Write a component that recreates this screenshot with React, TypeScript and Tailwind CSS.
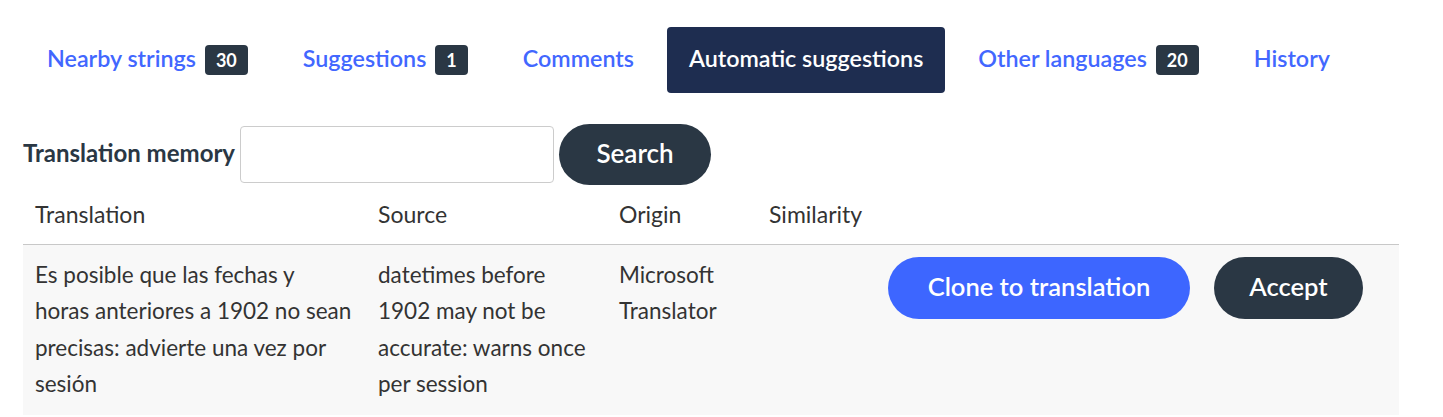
import { useState } from "react";

// ==========================================
// Types
// ==========================================

interface Tab {
    label: string;
    count?: number;
}

interface Suggestion {
    translation: string;
    source: string;
    origin: string;
    similarity: string;
}

const TABS: Tab[] = [
    { label: "Nearby strings", count: 30 },
    { label: "Suggestions", count: 1 },
    { label: "Comments" },
    { label: "Automatic suggestions" },
    { label: "Other languages", count: 20 },
    { label: "History" },
];

const ROWS: Suggestion[] = [
    {
        translation: "Es posible que las fechas y horas anteriores a 1902 no sean precisas: advierte una vez por sesión",
        source: "datetimes before 1902 may not be accurate: warns once per session",
        origin: "Microsoft Translator",
        similarity: "",
    },
];

const FONT = "font-['Lato','Liberation_Sans',sans-serif]";

// ==========================================
// Component
// ==========================================

export default function App() {
    const [active, setActive] = useState("Automatic suggestions");
    const [query, setQuery] = useState("");

    return (
        <div className={`${FONT} bg-white min-h-screen px-[23px] pt-[27px] text-[#333]`}>
            {/* Tabs */}
            <nav className="flex items-center gap-[11px] pl-[2px]">
                {TABS.map((tab) => (
                    <button
                        key={tab.label}
                        onClick={() => setActive(tab.label)}
                        className={
                            active === tab.label
                                ? "h-[66px] px-[22px] rounded-[4px] bg-[#1e2d50] text-white text-[23.3px] font-semibold flex items-center gap-[9px]"
                                : "h-[66px] px-[22px] rounded-[4px] text-[#4267ff] text-[23.3px] font-semibold flex items-center gap-[9px]"
                        }
                    >
                        <span className="pb-[3px]">{tab.label}</span>
                        {tab.count !== undefined && (
                            <span className="h-[30px] min-w-[32px] px-[11px] rounded-[4px] bg-[#2a3744] text-white text-[18px] font-bold flex items-center justify-center">
                                {tab.count}
                            </span>
                        )}
                    </button>
                ))}
            </nav>

            {/* Search form */}
            <div className="mt-[31px] flex items-center">
                <label className="text-[24px] font-bold text-[#2a3744] pb-[3px]">Translation memory</label>
                <input
                    value={query}
                    onChange={(e) => setQuery(e.target.value)}
                    className="ml-[5px] w-[314px] h-[57px] rounded-[4px] border border-[#cccccc] bg-white px-3 text-[20px] outline-none"
                />
                <button className="ml-[5px] w-[152px] h-[61px] rounded-full bg-[#2a3744] text-white text-[26px] font-semibold pb-[2px]">
                    Search
                </button>
            </div>

            {/* Results table */}
            <div className="w-[1376px]">
                <div className="grid grid-cols-[343px_241px_150px_119px_1fr] h-[60px] items-center border-b border-[#c8c8c8] text-[23px]">
                    <div className="px-[12px]">Translation</div>
                    <div className="px-[12px]">Source</div>
                    <div className="px-[12px]">Origin</div>
                    <div className="px-[12px]">Similarity</div>
                    <div />
                </div>
                {ROWS.map((row, i) => (
                    <div
                        key={i}
                        className="grid grid-cols-[343px_241px_150px_119px_1fr] bg-[#f8f8f8] pt-[12px] pb-[13px] text-[22.5px] leading-[36.3px]"
                    >
                        <div className="px-[12px]">{row.translation}</div>
                        <div className="px-[12px]">{row.source}</div>
                        <div className="px-[12px]">{row.origin}</div>
                        <div className="px-[12px]">{row.similarity}</div>
                        <div className="px-[12px] flex items-start gap-[24px]">
                            <button className="w-[302px] h-[62px] rounded-full bg-[#3d66ff] text-white text-[25.5px] font-semibold leading-none pb-[2px]">
                                Clone to translation
                            </button>
                            <button className="w-[149px] h-[62px] rounded-full bg-[#2a3744] text-white text-[25.5px] font-semibold leading-none pb-[2px]">
                                Accept
                            </button>
                        </div>
                    </div>
                ))}
            </div>
        </div>
    );
}
